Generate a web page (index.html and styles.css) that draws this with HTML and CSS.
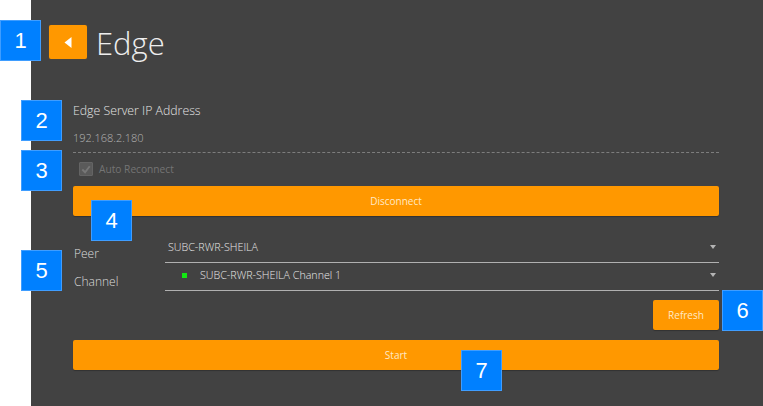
FILE: index.html
```html
<!DOCTYPE html>
<html lang="en">
<head>
<meta charset="utf-8">
<title>Edge</title>
<link rel="stylesheet" href="styles.css">
</head>
<body>
<main class="panel">
  <header class="head">
    <button class="back" aria-label="Back">
      <svg width="8" height="11" viewBox="0 0 8 11"><path d="M7.5 0V11L0.5 5.5Z" fill="#fff"/></svg>
    </button>
    <h1 class="title">Edge</h1>
  </header>
  <section class="server">
    <div class="label">Edge Server IP Address</div>
    <div class="ip">192.168.2.180</div>
  </section>
  <label class="check">
    <span class="box"><svg width="13" height="13" viewBox="0 0 13 13"><path d="M2.5 6.5L5.5 9.5L10.5 3" fill="none" stroke="#777" stroke-width="2"/></svg></span>
    <span>Auto Reconnect</span>
  </label>
  <button class="btn wide">Disconnect</button>
  <section class="pick">
    <div class="names"><div>Peer</div><div>Channel</div></div>
    <div class="selects">
      <div class="select peer"><span>SUBC-RWR-SHEILA</span><i class="caret"></i></div>
      <div class="select chan"><b class="dot"></b><span>SUBC-RWR-SHEILA Channel 1</span><i class="caret"></i></div>
    </div>
  </section>
  <div class="refresh-row"><button class="btn refresh">Refresh</button></div>
  <button class="btn wide">Start</button>
</main>
<div class="badge b1">1</div>
<div class="badge b2">2</div>
<div class="badge b3">3</div>
<div class="badge b4">4</div>
<div class="badge b5">5</div>
<div class="badge b6">6</div>
<div class="badge b7">7</div>
</body>
</html>
```
FILE: styles.css
```css
* { box-sizing: border-box; }
html, body { margin: 0; height: 100%; background: #fff; overflow: hidden; }
body { position: relative; font-family: "Open Sans", "Noto Sans", sans-serif; }
.panel {
  margin-left: 31px;
  height: 406px;
  background: #424242;
  padding: 25px 44px 0 42px;
  color: #e0e0e0;
  font-size: 11px;
}
.head { display: flex; align-items: center; margin-left: -24px; height: 34px; gap: 9px; }
.back {
  width: 38px; height: 34px; padding: 0; border: 0; border-radius: 2px;
  background: #ff9800; display: flex; align-items: center; justify-content: center;
  box-shadow: 0 0 1px #7a5a20;
}
.title { margin: 2px 0 0; font-size: 31px; font-weight: 300; color: #eee; line-height: 34px; }
.server { margin-top: 44px; height: 50px; border-bottom: 1px dashed #7d7d7d; }
.label { line-height: 16px; color: #e4e4e4; font-size: 12.3px; font-weight: 300; }
.ip { margin-top: 11px; line-height: 16px; color: #b4b4b4; font-weight: 300; }
.check { display: flex; align-items: center; gap: 6px; height: 33px; padding: 0 0 2px 6px; color: #747474; font-size: 10.2px; }
.box { width: 14px; height: 14px; background: #5a5a5a; border: 1px solid #646464; border-radius: 1px; display: flex; }
.btn {
  border: 0; padding: 0; border-radius: 2px; background: #ff9800; color: #ffe9c6;
  font: 10px "Open Sans", "Noto Sans", sans-serif; height: 30px;
  box-shadow: 0 1px 1px rgba(0,0,0,.25);
}
.wide { display: block; width: 100%; }
.pick { display: flex; margin-top: 19px; height: 56px; }
.names { width: 92px; padding: 5px 0 0 1px; line-height: 28px; color: #ddd; font-size: 12px; font-weight: 300; }
.selects { flex: 1; }
.select {
  display: flex; align-items: center; height: 28px; border-bottom: 1px solid #b0b0b0;
  font-size: 10.7px; color: #e8e8e8; padding-bottom: 3px; font-weight: 300;
}
.peer { padding-left: 3px; }
.chan { padding-left: 17px; }
.select span { flex: 1; }
.dot { width: 5px; height: 5px; background: #12e812; margin-right: 13px; }
.caret {
  width: 0; height: 0; position: relative; left: -2px;
  border: 3.5px solid transparent; border-top: 4px solid #b5b5b5; border-bottom: 0;
  margin-right: 1px;
}
.refresh-row { display: flex; justify-content: flex-end; margin-top: 9px; margin-bottom: 10px; }
.refresh { width: 66px; }
.badge {
  position: absolute; width: 41px; height: 41px; background: #0080ff;
  border: 1px solid #3f9dff; color: #fff;
  display: flex; align-items: center; justify-content: center;
  font: 22px "Liberation Sans", Arial, sans-serif;
}
.b1 { left: 0; top: 20px; }
.b2 { left: 21px; top: 100px; }
.b3 { left: 21px; top: 150px; }
.b4 { left: 91px; top: 200px; }
.b5 { left: 21px; top: 250px; }
.b6 { left: 722px; top: 290px; }
.b7 { left: 461px; top: 350px; }
```
